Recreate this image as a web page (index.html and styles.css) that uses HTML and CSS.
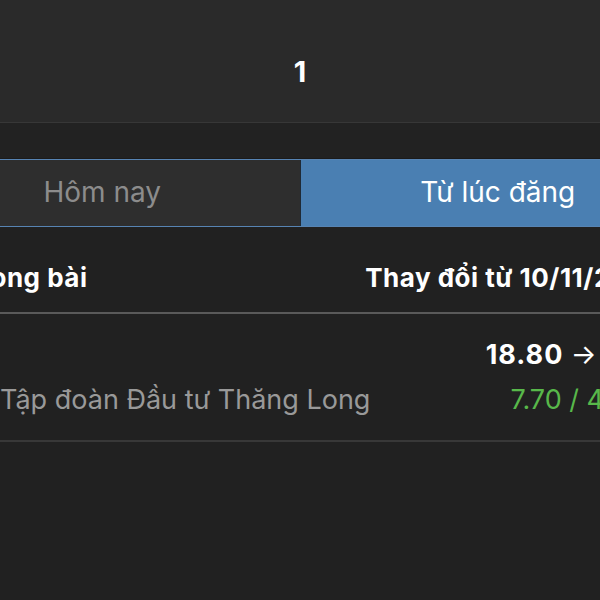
FILE: index.html
```html
<!DOCTYPE html>
<html lang="vi">
<head>
<meta charset="utf-8">
<link rel="stylesheet" href="styles.css">
</head>
<body>
<div class="page">
  <header class="topbar"><span class="title">1</span></header>
  <div class="spacer"></div>
  <div class="segment">
    <div class="seg seg-off">Hôm nay</div>
    <div class="seg seg-on">Từ lúc đăng</div>
  </div>
  <div class="thead">
    <span class="th-left">Mã trong bài</span>
    <span class="th-right">Thay đổi từ 10/11/2023</span>
  </div>
  <div class="row">
    <div class="line">
      <span class="ticker"></span>
      <span class="price">18.80 <span class="arrow">→</span> 26.50</span>
    </div>
    <div class="line">
      <span class="name">Tập đoàn Đầu tư Thăng Long</span>
      <span class="change">7.70 / 40.96%</span>
    </div>
  </div>
</div>
</body>
</html>
```
FILE: styles.css
```css
html, body {
  margin: 0;
  padding: 0;
  background: #212121;
  overflow: hidden;
  font-family: Inter, "Noto Sans", sans-serif;
}
.page {
  width: 800px;
  margin-left: -100px;
}
.topbar {
  height: 122px;
  background: #2a2a2a;
  border-bottom: 1px solid #373737;
  display: flex;
  align-items: center;
  justify-content: center;
}
.title {
  color: #fff;
  font-weight: 700;
  font-size: 29px;
  line-height: 30px;
  margin-top: 22px;
}
.spacer {
  height: 35px;
  background: #222;
  border-bottom: 1px solid #1b1b1b;
}
.segment {
  display: flex;
  margin: 0 4px;
  height: 66px;
  border: 1px solid #5784b3;
  background: #2e2e2e;
}
.seg {
  flex: 1;
  display: flex;
  align-items: center;
  justify-content: center;
  font-size: 28px;
  padding-bottom: 3px;
}
.seg-off {
  color: #8c8c8c;
  border-right: 1px solid #1f2a36;
}
.seg-on {
  background: #4a7fb2;
  color: #fff;
}
.thead {
  display: flex;
  justify-content: space-between;
  padding: 36px 37px 19px 23px;
  line-height: 30px;
  font-size: 26px;
  letter-spacing: 0.5px;
  font-weight: 700;
  color: #fff;
  border-bottom: 2px solid #5a5a5a;
}
.row {
  padding: 26px 12px 25px 100px;
  display: flex;
  flex-direction: column;
  gap: 15px;
  border-bottom: 2px solid #383838;
}
.line {
  display: flex;
  justify-content: space-between;
  line-height: 30px;
  font-size: 27px;
}
.price {
  color: #fff;
  font-weight: 700;
  letter-spacing: 1px;
}
.arrow {
  font-weight: 400;
}
.name {
  color: #999;
}
.change {
  color: #58b84a;
}
```
